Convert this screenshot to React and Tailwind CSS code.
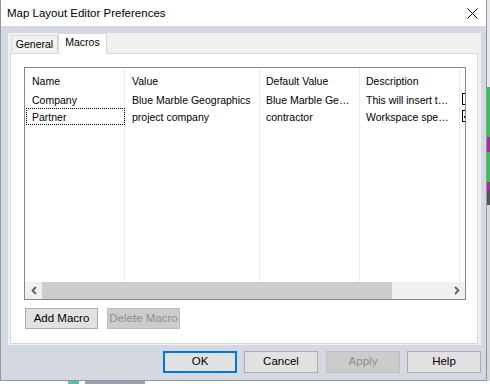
import React from "react";

const F = { fontFamily: '"Liberation Sans", Arial, sans-serif' };

function Chevron({ dir }) {
  return (
    <svg width="6" height="9" viewBox="0 0 6 9">
      {dir === "left" ? (
        <path d="M5 1 L1.5 4.5 L5 8" stroke="#606060" strokeWidth="1.8" fill="none" />
      ) : (
        <path d="M1 1 L4.5 4.5 L1 8" stroke="#606060" strokeWidth="1.8" fill="none" />
      )}
    </svg>
  );
}

function Bracket({ mark }) {
  return (
    <div className="relative w-[3px] h-[12px] border-l border-t border-b border-black mt-[2px] ml-[2px]">
      {mark && <div className="absolute left-[1px] top-[5px] w-[1px] h-[2px] bg-black" />}
    </div>
  );
}

function Row({ cells, focus, mark }) {
  return (
    <div className="flex h-[17px] text-black items-stretch">
      <div className="w-[100px] shrink-0 relative flex items-center pl-[7px] pt-[3px]">
        {focus && <div className="absolute left-[1px] right-0 top-0 bottom-0 border border-dotted border-black" />}
        <span className="relative">{cells[0]}</span>
      </div>
      <div className="w-[135px] shrink-0 flex items-center pl-[7px] pt-[3px]">{cells[1]}</div>
      <div className="w-[100px] shrink-0 flex items-center pl-[6px] pt-[3px]">{cells[2]}</div>
      <div className="w-[100px] shrink-0 flex items-center pl-[6px] pt-[3px]">{cells[3]}</div>
      <div className="flex-1"><Bracket mark={mark} /></div>
    </div>
  );
}

function Btn({ children, w, disabled, def, h = "h-[22px]" }) {
  const base = disabled
    ? "bg-[#cccccc] border border-[#bfbfbf] text-[#8f8f8f]"
    : def
    ? "bg-[#e1e1e1] border-2 border-[#0078d7] text-black"
    : "bg-[#e1e1e1] border border-[#adadad] text-black";
  return (
    <div className={`${w} ${h} ${base} flex items-center justify-center text-[11.5px] shrink-0`}>
      {children}
    </div>
  );
}

export default function App() {
  return (
    <div className="w-[490px] h-[384px] overflow-hidden flex flex-col bg-white" style={F}>
      <div className="flex h-[381px]">
        {/* window */}
        <div className="w-[487px] h-[381px] shrink-0 border-l border-r border-b border-[#8f95a3] bg-[#d4d8e0] flex flex-col">
          {/* title bar */}
          <div className="h-[26px] bg-white flex items-center justify-between shrink-0 pt-[2px]">
            <span className="ml-[6px] text-[11.5px] text-black">Map Layout Editor Preferences</span>
            <svg width="11" height="11" viewBox="0 0 11 11" className="mr-[8px] -mt-[2px]">
              <path d="M0.5 0.5 L10.5 10.5 M10.5 0.5 L0.5 10.5" stroke="#000" strokeWidth="1" />
            </svg>
          </div>
          {/* tab control */}
          <div className="ml-[7px] mt-[7px] w-[473px] h-[312px] bg-[#f0f0f0] flex flex-col">
            <div className="h-[20px] flex items-end pl-[3px] shrink-0">
              <div className="w-[47px] h-[18px] border border-b-0 border-[#d9d9d9] bg-[#f0f0f0] flex items-center justify-center text-[10.5px] text-black">
                General
              </div>
              <div className="w-[49px] h-[21px] -mb-[1px] border border-b-0 border-[#d9d9d9] bg-white flex items-center justify-center text-[10.5px] text-black pb-[2px] relative z-10">
                Macros
              </div>
            </div>
            <div className="ml-[2px] w-[468px] h-[291px] border border-[#d9d9d9] bg-white pl-[13px] pt-[13px] flex flex-col">
              {/* list view */}
              <div className="w-[442px] h-[233px] border border-[#828790] bg-white flex flex-col text-[10.5px] overflow-hidden">
                <div className="relative flex-1">
                  {/* column lines */}
                  <div className="absolute inset-0 flex pointer-events-none">
                    <div className="w-[100px] shrink-0 border-r border-[#e5ebf3]" />
                    <div className="w-[135px] shrink-0 border-r border-[#e5ebf3]" />
                    <div className="w-[100px] shrink-0 border-r border-[#e5ebf3]" />
                    <div className="w-[100px] shrink-0 border-r border-[#e5ebf3]" />
                  </div>
                  <div className="relative">
                    <div className="flex h-[23px] items-center text-black pt-[4px]">
                      <div className="w-[100px] shrink-0 pl-[7px]">Name</div>
                      <div className="w-[135px] shrink-0 pl-[7px]">Value</div>
                      <div className="w-[100px] shrink-0 pl-[6px]">Default Value</div>
                      <div className="w-[100px] shrink-0 pl-[6px]">Description</div>
                    </div>
                    <Row cells={["Company", "Blue Marble Geographics", "Blue Marble Ge…", "This will insert t…"]} />
                    <Row cells={["Partner", "project company", "contractor", "Workspace spe…"]} focus mark />
                  </div>
                </div>
                {/* scrollbar */}
                <div className="h-[17px] flex bg-[#f0f0f0] shrink-0">
                  <div className="w-[17px] flex items-center justify-center"><Chevron dir="left" /></div>
                  <div className="w-[350px] bg-[#cdcdcd]" />
                  <div className="flex-1" />
                  <div className="w-[17px] flex items-center justify-center"><Chevron dir="right" /></div>
                </div>
              </div>
              <div className="flex mt-[8px] ml-[1px] gap-[9px]">
                <Btn w="w-[73px]" h="h-[21px]">Add Macro</Btn>
                <Btn w="w-[73px]" h="h-[21px]" disabled>Delete Macro</Btn>
              </div>
            </div>
          </div>
          {/* bottom buttons */}
          <div className="flex justify-end pr-[5px] mt-[6px]">
            <Btn w="w-[74px]" def>OK</Btn>
            <div className="w-[7px]" />
            <Btn w="w-[74px]">Cancel</Btn>
            <div className="w-[8px]" />
            <Btn w="w-[74px]" disabled>Apply</Btn>
            <div className="w-[7px]" />
            <Btn w="w-[74px]">Help</Btn>
          </div>
        </div>
        {/* background app right strip */}
        <div className="flex-1 flex flex-col">
          <div className="h-[87px] bg-[#e8e8e8]" />
          <div className="h-[50px] bg-[#2fc84a]" />
          <div className="h-[15px] bg-[#b0289c]" />
          <div className="h-[30px] bg-[#2fc84a]" />
          <div className="h-[8px] bg-[#b0289c]" />
          <div className="h-[15px] bg-[#555]" />
          <div className="flex-1 bg-[#d8d8d8]" />
        </div>
      </div>
      <div className="h-[3px] flex bg-white">
        <div className="w-[68px]" />
        <div className="w-[11px] bg-[#5cbcb4]" />
        <div className="w-[6px]" />
        <div className="w-[60px] bg-[#9aa0b0]" />
      </div>
    </div>
  );
}
